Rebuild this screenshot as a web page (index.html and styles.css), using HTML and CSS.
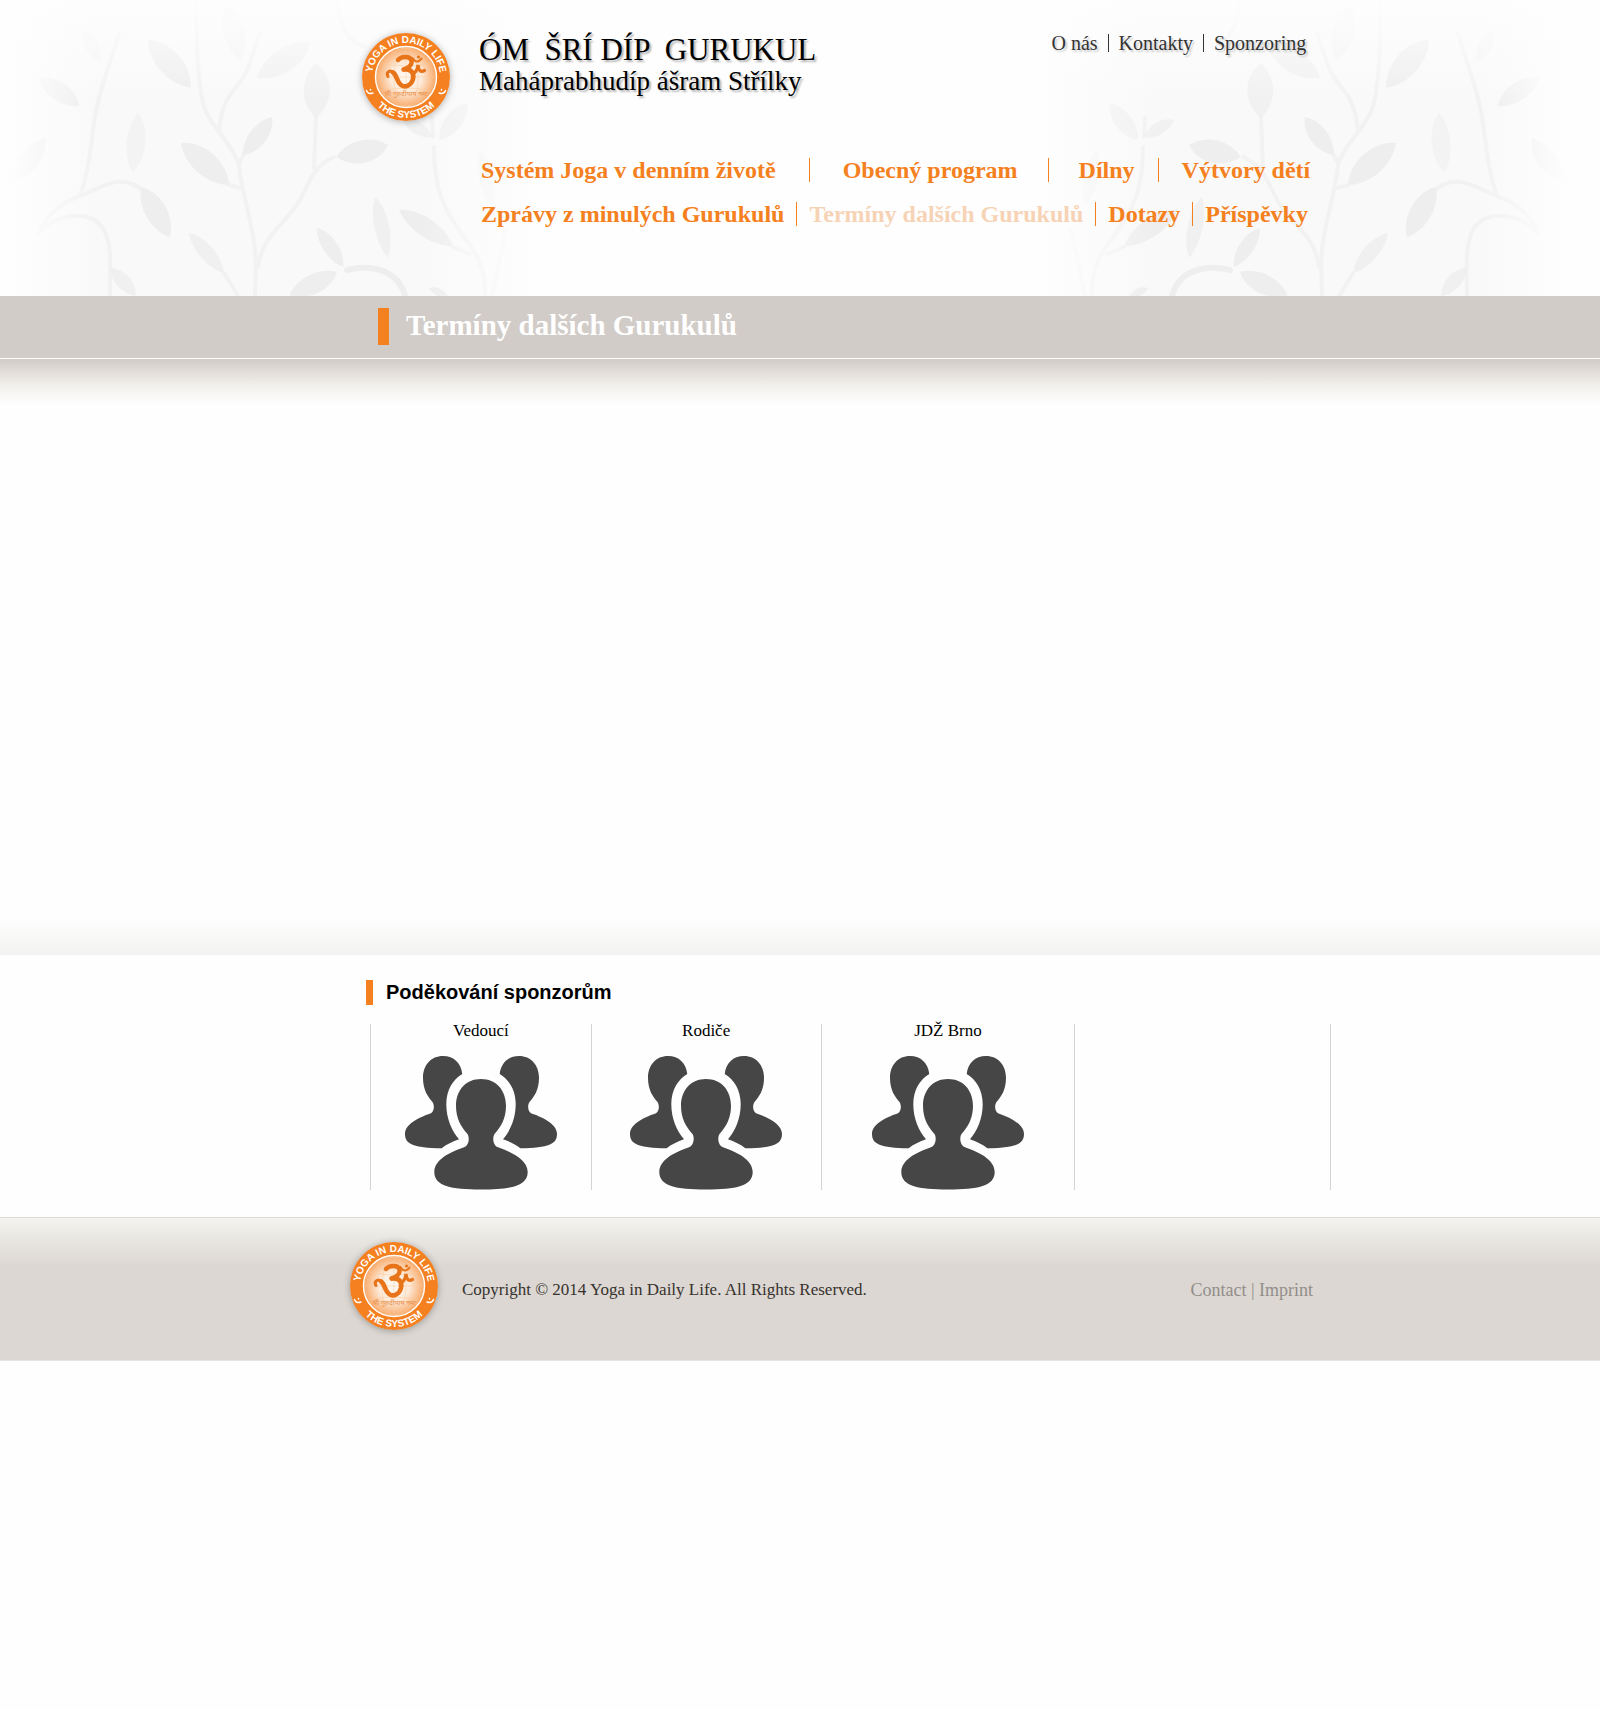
FILE: index.html
```
<!DOCTYPE html>
<html lang="cs">
<head>
<meta charset="utf-8">
<meta name="viewport" content="width=device-width, initial-scale=1">
<title>Termíny dalších Gurukulů</title>
<link rel="stylesheet" href="styles.css">
</head>
<body>
<svg class="defs" width="0" height="0" aria-hidden="true">
  <defs>
    <radialGradient id="glow">
      <stop offset="0" stop-color="#fffaf5"/>
      <stop offset=".5" stop-color="#fdebdb"/>
      <stop offset="1" stop-color="#f8a765"/>
    </radialGradient>
    <path id="arc-top" d="M10 44A34 34 0 0 1 78 44" />
    <path id="arc-bottom" d="M3 44A41 41 0 0 0 85 44"/>
    <symbol id="logo" viewBox="0 0 88 88">
      <circle cx="44" cy="44" r="44" fill="#f58020"/>
      <circle cx="44" cy="44" r="30.500" fill="url(#glow)" stroke="#fff" stroke-width="1.400"/>
      <g fill="none" stroke="#fbc898" stroke-width=".5">
        <ellipse cx="44" cy="44" rx="12" ry="29"/>
        <ellipse cx="44" cy="44" rx="23" ry="29"/>
        <path d="M44 15V73M15 44H73M19 30Q44 36 69 30M19 58Q44 52 69 58"/>
      </g>
      <g fill="none" stroke="#e8741a" stroke-linecap="round">
        <path stroke-width="4.400" d="M36 27C39 23.500 48 22.500 49.500 27.500C50.500 32 46 35.500 41.500 36.500"/>
        <path stroke-width="4.600" d="M42 36.500C49 35.500 52.500 40 51 46C49.500 52 43.500 55.500 39 52C34.500 48.500 35 42 31 39.500"/>
        <path stroke-width="3" d="M31.500 39.500C28 36.500 23.500 39 26 43.500"/>
        <path stroke-width="3.200" d="M50.500 41C54.500 39.500 55.500 36 56 32C56.500 36.500 58 40 62.500 37.500"/>
        <path stroke-width="2" d="M50.500 25C53 29.500 57 29.500 59.500 25.500"/>
      </g>
      <circle cx="56.500" cy="24" r="1.500" fill="#e8741a"/>
      <text class="logo-motto" x="44" y="63" text-anchor="middle">श्री गुरुदीपाय नमः</text>
      <g fill="none" stroke="#fff" stroke-width="1.400" stroke-linecap="round">
        <path d="M4.500 57.500C5.500 60.500 8 61 11 60M8.500 56.500L8.600 57"/>
        <path d="M83.500 57.500C82.500 60.500 80 61 77 60M79.500 56.500L79.400 57"/>
      </g>
      <text class="logo-ring"><textPath href="#arc-top" startOffset="50%" text-anchor="middle">YOGA IN DAILY LIFE</textPath></text>
      <text class="logo-ring"><textPath href="#arc-bottom" startOffset="50%" text-anchor="middle">THE SYSTEM</textPath></text>
    </symbol>

    <symbol id="people" viewBox="0 0 152 134">
      <path id="person-back" d="M57.300 18C56 7 49 0 38 0C26 0 18 9 18 22C18 34 23 41 27.500 46C29.500 49 29.500 55 26 57.300C12 62 0 69 0 78C0 88 8 92 36.700 92.300C41 88.500 48 85.500 54 83.300C47 75 41.300 63 41.300 48C41.300 34 48 23.500 57.300 18Z"/>
      <use href="#person-back" transform="translate(152 0) scale(-1 1)"/>
      <path d="M76 23C61 23 51 34 51 50C51 62 56 71 62.500 78C64.500 81 64.500 89 59 91.300C45 96 29.300 104 29.300 116C29.300 130 46 133.500 76 133.500C106 133.500 122.700 130 122.700 116C122.700 104 107 96 93 91.300C87.500 89 87.500 81 89.500 78C96 71 101 62 101 50C101 34 91 23 76 23Z"/>
    </symbol>

    <path id="leaf" d="M0 0C22 -24 70 -28 100 0C75 22 28 24 0 0Z"/>
    <linearGradient id="fade-x">
      <stop offset="0" stop-color="#fefefe"/>
      <stop offset=".03" stop-color="#fefefe" stop-opacity=".9"/>
      <stop offset=".18" stop-color="#fefefe" stop-opacity="0"/>
      <stop offset=".78" stop-color="#fefefe" stop-opacity="0"/>
      <stop offset="1" stop-color="#fefefe"/>
    </linearGradient>
    <linearGradient id="fade-y" x2="0" y2="1">
      <stop offset="0" stop-color="#fefefe" stop-opacity=".9"/>
      <stop offset="1" stop-color="#fefefe" stop-opacity="0"/>
    </linearGradient>
    <g id="vines">
      <rect width="540" height="296" fill="#f9f9f9"/>
      <g fill="none" stroke="#f2f2f2" stroke-width="4" stroke-linecap="round">
        <path d="M196 0C197 30 196 70 203 103C208 125 232 142 239 165C242 195 252 220 255 250C257 265 255 280 255 296"/>
        <path d="M219 132C222 90 240 90 248 68L260 33"/>
        <path d="M258 267C262 235 285 225 300 200C310 180 315 165 334 157M314 168L316 117"/>
        <path d="M119 33C112 60 98 90 93 130C90 155 86 185 79 197"/>
        <path d="M41 227C55 205 70 200 85 194C105 185 125 172 145 193"/>
        <path d="M38 233C60 212 90 210 103 228C113 245 110 270 110 296"/>
        <path d="M434 147C434 200 450 215 461 233C478 255 486 270 485 296"/>
        <path stroke="#eee" stroke-width="6" d="M347 270C372 264 398 270 405 296"/>
        <path d="M337 0C340 25 345 40 365 47M432 118L433 137M239 163L245 152M229 185L240 188M224 273L238 296M453 247L470 254M506 230L492 296"/>
      </g>
      <g fill="#eee">
        <use href="#leaf" transform="translate(148 40) rotate(48) scale(.64)"/>
        <use href="#leaf" transform="translate(310 42) rotate(146) scale(.64)" opacity=".7"/>
        <use href="#leaf" transform="translate(316 63) rotate(90) scale(.55 .7)" opacity=".7"/>
        <use href="#leaf" transform="translate(38 78) rotate(34) scale(.5)"/>
        <use href="#leaf" transform="translate(388 145) rotate(167) scale(.53 .62)"/>
        <use href="#leaf" transform="translate(272 117) rotate(127) scale(.48)"/>
        <use href="#leaf" transform="translate(181 143) rotate(41) scale(.64)"/>
        <use href="#leaf" transform="translate(45 138) rotate(126) scale(.52)"/>
        <use href="#leaf" transform="translate(138 113) rotate(95) scale(.6 .5)" opacity=".5"/>
        <use href="#leaf" transform="translate(141 187) rotate(60) scale(.58)"/>
        <use href="#leaf" transform="translate(189 233) rotate(49) scale(.53 .4)" opacity=".8"/>
        <use href="#leaf" transform="translate(317 228) rotate(56) scale(.47 .4)"/>
        <use href="#leaf" transform="translate(337 272) rotate(154) scale(.53)"/>
        <use href="#leaf" transform="translate(375 197) rotate(78) scale(.62 .4)" opacity=".8"/>
        <use href="#leaf" transform="translate(399 210) rotate(34) scale(.65 .5)"/>
        <use href="#leaf" transform="translate(467 103) rotate(127) scale(.46)" opacity=".7"/>
        <use href="#leaf" transform="translate(403 120) rotate(30) scale(.34)" opacity=".7"/>
        <use href="#leaf" transform="translate(226 5) rotate(75) scale(.57)" opacity=".6"/>
        <use href="#leaf" transform="translate(429 288) rotate(25) scale(.21)"/>
        <use href="#leaf" transform="translate(110 268) rotate(47) scale(.38)" opacity=".8"/>
        <use href="#leaf" transform="translate(480 150) rotate(78) scale(.58 .4)" opacity=".5"/>
        <use href="#leaf" transform="translate(83 30) rotate(62) scale(.36)" opacity=".4"/>
      </g>
      <rect width="541" height="296" fill="url(#fade-x)"/>
      <rect width="541" height="100" fill="url(#fade-y)"/>
    </g>
  </defs>
</svg>

<header class="header">
  <svg class="header-art" viewBox="0 0 1600 296" preserveAspectRatio="xMidYMin slice" aria-hidden="true">
    <use href="#vines"/>
    <use href="#vines" transform="translate(1577 0) scale(-1 1)"/>
  </svg>
  <div class="wrap header-inner">
    <a class="logo" href="#" aria-label="Yoga in Daily Life"><svg><use href="#logo"/></svg></a>
    <div class="header-main">
      <div class="header-top">
        <div class="brand">
          <h1>ÓM &nbsp;ŠRÍ DÍP &nbsp;GURUKUL</h1>
          <p>Maháprabhudíp ášram Střílky</p>
        </div>
        <nav aria-label="Informace">
          <ul class="links links-top">
            <li><a href="#">O nás</a></li>
            <li><a href="#">Kontakty</a></li>
            <li><a href="#">Sponzoring</a></li>
          </ul>
        </nav>
      </div>
      <nav class="main-nav" aria-label="Hlavní menu">
        <ul class="links">
          <li><a href="#">Systém Joga v denním životě</a></li>
          <li class="wide"><a href="#">Obecný program</a></li>
          <li class="medium"><a href="#">Dílny</a></li>
          <li class="snug"><a href="#">Výtvory dětí</a></li>
        </ul>
        <ul class="links">
          <li><a href="#">Zprávy z minulých Gurukulů</a></li>
          <li><a href="#" class="current" aria-current="page">Termíny dalších Gurukulů</a></li>
          <li><a href="#">Dotazy</a></li>
          <li><a href="#">Příspěvky</a></li>
        </ul>
      </nav>
    </div>
  </div>
</header>

<div class="title-bar">
  <div class="wrap">
    <h2 class="marked">Termíny dalších Gurukulů</h2>
  </div>
</div>

<main class="content"></main>

<section class="sponsors">
  <div class="wrap">
    <h3 class="marked">Poděkování sponzorům</h3>
    <ul class="sponsor-list">
      <li><span>Vedoucí</span><svg class="people" aria-hidden="true"><use href="#people"/></svg></li>
      <li><span>Rodiče</span><svg class="people" aria-hidden="true"><use href="#people"/></svg></li>
      <li><span>JDŽ Brno</span><svg class="people" aria-hidden="true"><use href="#people"/></svg></li>
      <li></li>
    </ul>
  </div>
</section>

<footer class="footer">
  <div class="wrap">
    <a class="logo" href="#" aria-label="Yoga in Daily Life"><svg><use href="#logo"/></svg></a>
    <p class="copyright">Copyright © 2014 Yoga in Daily Life. All Rights Reserved.</p>
    <p class="legal"><a href="#">Contact</a> | <a href="#">Imprint</a></p>
  </div>
</footer>
</body>
</html>
```
FILE: styles.css
```
* {
  box-sizing: border-box;
}

body {
  margin: 0;
  background: #fefefe;
  color: #000;
  font-family: "Liberation Serif", "Times New Roman", serif;
}

h1, h2, h3, p, ul {
  margin: 0;
  padding: 0;
}

ul {
  list-style: none;
}

a {
  color: inherit;
  text-decoration: none;
}

.defs {
  position: absolute;
}

.wrap {
  max-width: 1100px;
  margin: 0 auto;
}

.logo {
  flex: none;
  width: 88px;
  height: 88px;
  border-radius: 50%;
  box-shadow: 0 1px 7px rgba(0, 0, 0, .3);
}

.logo svg {
  display: block;
  width: 100%;
  height: 100%;
}

.logo-ring {
  fill: #fff;
  font: 700 10px "Liberation Sans", Arial, sans-serif;
}

.logo-motto {
  fill: #e8904a;
  font: 7px "Noto Sans", sans-serif;
}

/* Header */
.header {
  position: relative;
}

.header-art {
  position: absolute;
  inset: 0;
  width: 100%;
  height: 100%;
}

.header-inner {
  position: relative;
  display: flex;
  align-items: flex-start;
  gap: 29px;
  padding: 33px 40px 70px 112px;
}

.header-main {
  flex: 1;
}

.header-top {
  display: flex;
  justify-content: space-between;
  align-items: flex-start;
  padding-top: 1px;
}

.brand {
  text-shadow: 2px 2px 2px rgba(0, 0, 0, .3);
}

.brand h1 {
  font-size: 31px;
  font-weight: 400;
  line-height: 32px;
}

.brand p {
  font-size: 27px;
  line-height: 30px;
}

.links {
  display: flex;
  white-space: nowrap;
}

.links li {
  display: flex;
}

.links li + li::before {
  content: "";
  width: 1px;
  margin: 0 12px;
  background: currentColor;
}

.links .wide::before {
  margin: 0 33px;
}

.links .medium::before {
  margin: 0 30px;
}

.links .snug::before {
  margin: 0 23px;
}

.links-top {
  padding-right: 4px;
  color: #333;
  font-size: 20px;
  line-height: 18px;
  text-shadow: 2px 2px 2px rgba(0, 0, 0, .2);
}

.links-top li + li::before {
  margin: 0 10px;
}

.main-nav {
  display: grid;
  gap: 20px;
  margin-top: 62px;
  padding-left: 2px;
  color: #f58020;
  font-size: 24px;
  font-weight: 700;
  line-height: 24px;
}

.main-nav .current {
  color: #f7d3b6;
}

/* Headings with an orange marker */
.marked {
  display: flex;
}

.marked::before {
  content: "";
  background: #f58020;
}

.title-bar {
  background: #d1ccc8;
  border-bottom: 1px solid #fff;
}

.title-bar .wrap {
  padding: 12px 40px 13px 128px;
}

.title-bar .marked {
  gap: 17px;
  min-height: 37px;
  color: #fff;
  font-size: 29px;
  line-height: 34px;
}

.title-bar .marked::before {
  width: 11px;
}

.content {
  min-height: 596px;
  background:
    linear-gradient(#d1cbc6, #e3dfda 30%, #f3f2ee 62%, #fefefe) top / 100% 46px no-repeat,
    linear-gradient(#fefefe, #f2f2f0) bottom / 100% 36px no-repeat;
}

/* Sponsors */
.sponsors .wrap {
  padding: 25px 19px 27px 116px;
}

.sponsors .marked {
  gap: 13px;
  font: 700 20px/25px "Liberation Sans", Arial, sans-serif;
}

.sponsors .marked::before {
  width: 7px;
}

.sponsor-list {
  display: grid;
  grid-template-columns: 221fr 230fr 254fr 256fr;
  min-height: 166px;
  margin: 19px 0 0 4px;
  border-right: 1px solid #d4d4d4;
}

.sponsor-list li {
  display: flex;
  flex-direction: column;
  align-items: center;
  gap: 18px;
  border-left: 1px solid #d4d4d4;
  font-size: 17px;
  line-height: 14px;
}

.people {
  width: 152px;
  height: 134px;
  fill: #464646;
}

/* Footer */
.footer {
  border-top: 1px solid #dddbd7;
  border-bottom: 1px solid #e6e3e0;
  background: linear-gradient(#f4f3ef, #dcd7d2 48px);
}

.footer .wrap {
  display: flex;
  align-items: center;
  gap: 24px;
  padding: 24px 37px 30px 100px;
}

.footer p {
  padding-top: 8px;
  line-height: 20px;
}

.copyright {
  color: #37322e;
  font-size: 17px;
}

.legal {
  margin-left: auto;
  color: #928e8b;
  font-size: 18px;
}
```
